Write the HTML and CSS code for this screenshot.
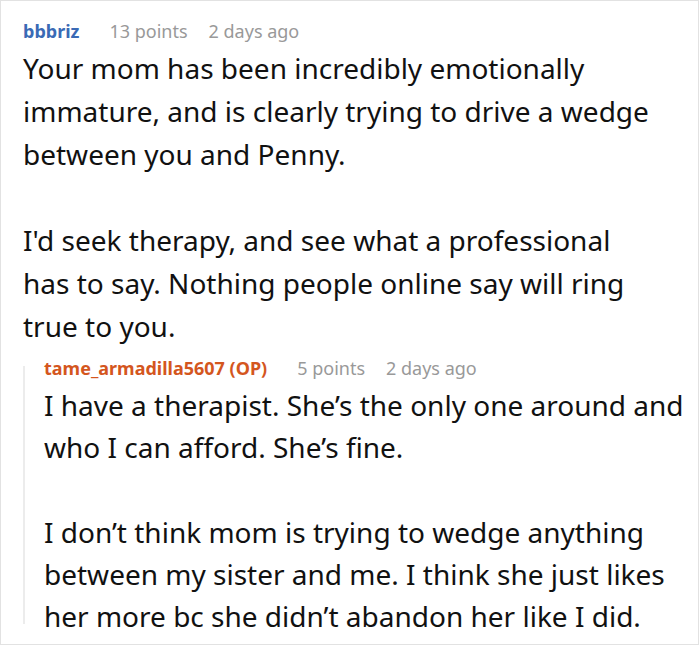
FILE: index.html
```html
<!DOCTYPE html>
<html>
<head>
<meta charset="utf-8">
<link rel="stylesheet" href="styles.css">
</head>
<body>
<div class="card">
  <div class="comment">
    <div class="meta">
      <span class="author">bbbriz</span>
      <span class="info">13 points</span>
      <span class="info">2 days ago</span>
    </div>
    <div class="body main-body">
      <p>Your mom has been incredibly emotionally immature, and is clearly trying to drive a wedge between you and Penny.</p>
      <p>I'd seek therapy, and see what a professional has to say. Nothing people online say will ring true to you.</p>
    </div>
    <div class="reply">
      <div class="meta">
        <span class="author op">tame_armadilla5607 (OP)</span>
        <span class="info">5 points</span>
        <span class="info">2 days ago</span>
      </div>
      <div class="body reply-body">
        <p>I have a therapist. She’s the only one around and who I can afford. She’s fine.</p>
        <p>I don’t think mom is trying to wedge anything between my sister and me. I think she just likes her more bc she didn’t abandon her like I did.</p>
      </div>
    </div>
  </div>
</div>
</body>
</html>
```
FILE: styles.css
```css
html, body {
  margin: 0;
  padding: 0;
  background: #fff;
}
.card {
  box-sizing: border-box;
  width: 699px;
  height: 645px;
  border: 1px solid #e2e2e2;
  background: #fff;
  overflow: hidden;
  font-family: "Noto Sans", "Open Sans", sans-serif;
  color: #111;
}
.comment {
  padding: 18px 12px 0 22px;
}
.meta {
  display: flex;
  align-items: baseline;
  font-size: 18px;
  line-height: 24px;
}
.author {
  font-weight: 700;
  color: #3a6ab5;
  margin-right: 30px;
}
.author.op {
  color: #d4561e;
}
.info {
  color: #999;
  margin-right: 21px;
}
.body {
  font-size: 28px;
  line-height: 43px;
  margin-top: 4px;
}
.body p {
  margin: 0 0 43px 0;
}
.body p:last-child {
  margin-bottom: 0;
}
.main-body {
  max-width: 630px;
}
.reply-body {
  line-height: 42.3px;
}
.reply-body p {
  margin-bottom: 42.3px;
}
.reply {
  position: relative;
  margin-top: 8px;
  padding-left: 21px;
}
.reply::before {
  content: "";
  position: absolute;
  left: 0;
  top: 10px;
  bottom: 14px;
  width: 2px;
  background: #ececec;
}
```
